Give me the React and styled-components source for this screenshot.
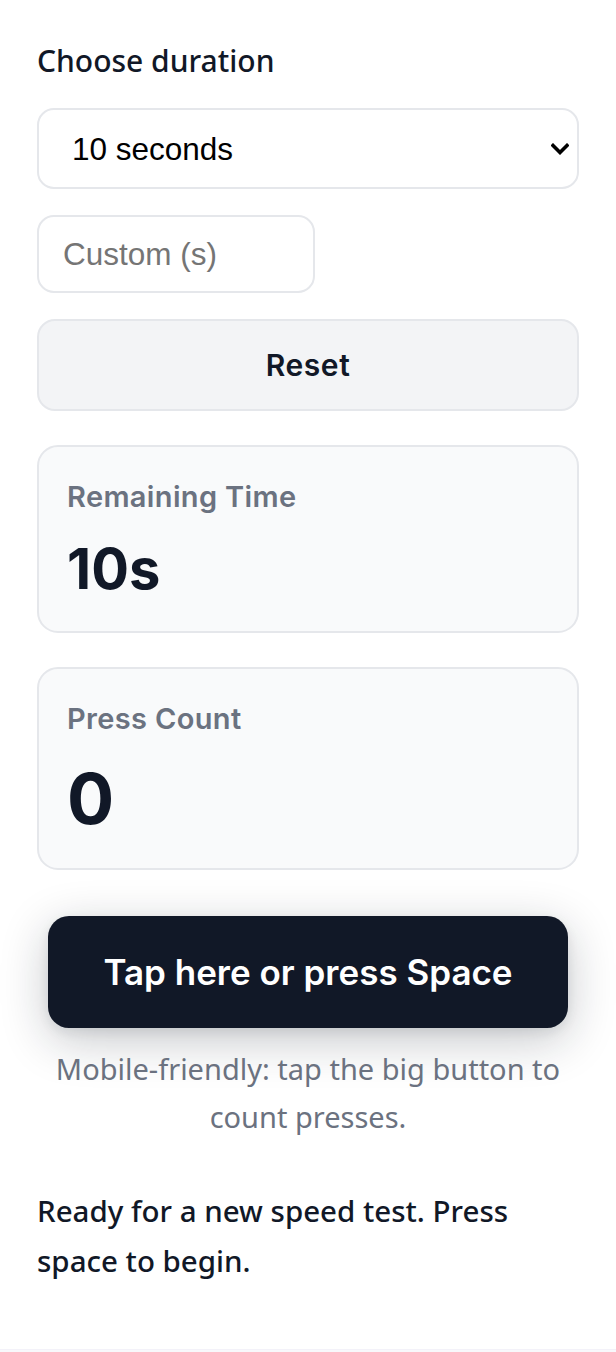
import React from "react";
import styled, { createGlobalStyle } from "styled-components";

const GlobalStyle = createGlobalStyle`
  html, body { margin: 0; padding: 0; background: #ffffff; }
  * { box-sizing: border-box; }
`;

const Page = styled.div`
  display: flex;
  flex-direction: column;
  min-height: 1352px;
`;

const Main = styled.main`
  display: flex;
  flex-direction: column;
  padding: 37px 37px 63px;
`;

const FieldLabel = styled.label`
  font-family: "Noto Sans", "Open Sans", sans-serif;
  font-size: 30px;
  font-weight: 500;
  line-height: 47px;
  color: #111827;
`;

const SelectWrap = styled.div`
  position: relative;
  margin-top: 24px;
`;

const Select = styled.select`
  appearance: none;
  -webkit-appearance: none;
  width: 100%;
  height: 81px;
  padding: 0 33px;
  border: 2px solid #e5e7eb;
  border-radius: 17px;
  background: #ffffff;
  font-family: "Liberation Sans", Arial, sans-serif;
  font-size: 31.5px;
  color: #000000;
  outline: none;
`;

const Chevron = styled.svg`
  position: absolute;
  right: 10px;
  top: 50%;
  transform: translateY(-50%);
  pointer-events: none;
`;

const CustomInput = styled.input`
  margin-top: 26px;
  width: 278px;
  height: 78px;
  padding: 0 24px;
  border: 2px solid #e5e7eb;
  border-radius: 17px;
  background: #ffffff;
  font-family: "Liberation Sans", Arial, sans-serif;
  font-size: 31.5px;
  color: #111827;
  outline: none;
  &::placeholder { color: #757575; }
`;

const ResetButton = styled.button`
  margin-top: 26px;
  height: 92px;
  border: 2px solid #e5e7eb;
  border-radius: 18px;
  background: #f3f4f6;
  font-family: Inter, "Noto Sans", sans-serif;
  font-size: 30px;
  font-weight: 600;
  letter-spacing: 0.6px;
  color: #111827;
  cursor: pointer;
`;

const Card = styled.section`
  margin-top: 34px;
  display: flex;
  flex-direction: column;
  padding: 30px 28px 27px;
  border: 2px solid #e5e7eb;
  border-radius: 21px;
  background: #f9fafb;
`;

const CardLabel = styled.div`
  font-family: Inter, "Noto Sans", sans-serif;
  font-size: 29px;
  font-weight: 600;
  letter-spacing: 0.35px;
  line-height: 40px;
  color: #6b7280;
`;

const CardValue = styled.div`
  margin-top: 17px;
  font-family: Inter, "Noto Sans", sans-serif;
  font-size: ${(p) => p.$size}px;
  font-weight: 700;
  line-height: ${(p) => p.$line}px;
  color: #111827;
`;

const TapButton = styled.button`
  margin: 46px auto 0;
  width: 520px;
  height: 112px;
  border: none;
  border-radius: 21px;
  background: #111827;
  box-shadow: 0 12px 48px rgba(17, 24, 39, 0.24), 0 4px 12px rgba(17, 24, 39, 0.08);
  font-family: Inter, "Noto Sans", sans-serif;
  font-size: 35px;
  font-weight: 600;
  color: #ffffff;
  cursor: pointer;
`;

const Note = styled.p`
  margin: 17px 0 0;
  font-family: "Noto Sans", "Open Sans", sans-serif;
  font-size: 29px;
  line-height: 48px;
  text-align: center;
  color: #6b7280;
`;

const Status = styled.p`
  margin: 45px 0 0;
  font-family: "Noto Sans", "Open Sans", sans-serif;
  font-size: 29.5px;
  font-weight: 500;
  line-height: 50px;
  color: #111827;
`;

const Footer = styled.footer`
  flex: 1;
  background: #f8f8fb;
  border-top: 1px solid #f3f2f9;
`;

export default function App() {
  return (
    <Page>
      <GlobalStyle />
      <Main>
        <FieldLabel htmlFor="duration">Choose duration</FieldLabel>
        <SelectWrap>
          <Select id="duration" defaultValue="10">
            <option value="5">5 seconds</option>
            <option value="10">10 seconds</option>
            <option value="30">30 seconds</option>
            <option value="60">60 seconds</option>
          </Select>
          <Chevron width="18" height="12" viewBox="0 0 18 12" aria-hidden="true">
            <path d="M2 2.5 L9 9.5 L16 2.5" fill="none" stroke="#000" strokeWidth="3.6" strokeLinecap="square" />
          </Chevron>
        </SelectWrap>
        <CustomInput type="number" placeholder="Custom (s)" />
        <ResetButton>Reset</ResetButton>
        <Card>
          <CardLabel>Remaining Time</CardLabel>
          <CardValue $size={56} $line={70}>10s</CardValue>
        </Card>
        <Card>
          <CardLabel>Press Count</CardLabel>
          <CardValue $size={70} $line={85}>0</CardValue>
        </Card>
        <TapButton>Tap here or press Space</TapButton>
        <Note>Mobile-friendly: tap the big button to count presses.</Note>
        <Status>Ready for a new speed test. Press space to begin.</Status>
      </Main>
      <Footer />
    </Page>
  );
}
